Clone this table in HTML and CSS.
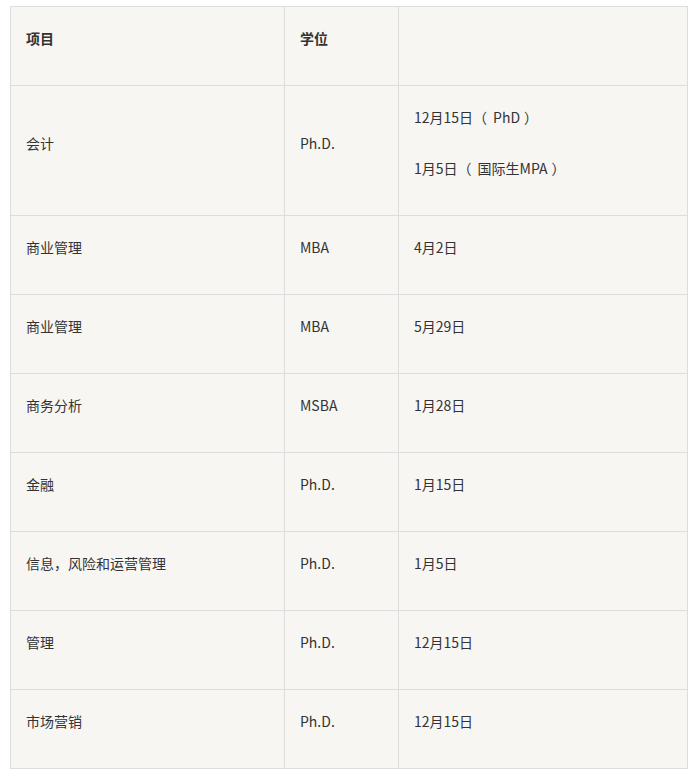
FILE: index.html
```html
<!DOCTYPE html>
<html lang="zh-CN">
<head>
<meta charset="utf-8">
<title>项目</title>
<link rel="stylesheet" href="styles.css">
</head>
<body>
<div class="wrap">
<table class="grid">
<colgroup>
<col class="c1"><col class="c2"><col class="c3">
</colgroup>
<thead>
<tr><th>项目</th><th>学位</th><th></th></tr>
</thead>
<tbody>
<tr><td>会计</td><td>Ph.D.</td><td><p>12月15日<span class="po">（</span>PhD<span class="pc">）</span></p><p>1月5日<span class="po">（</span>国际生MPA<span class="pc">）</span></p></td></tr>
<tr><td>商业管理</td><td>MBA</td><td>4月2日</td></tr>
<tr><td>商业管理</td><td>MBA</td><td>5月29日</td></tr>
<tr><td>商务分析</td><td>MSBA</td><td>1月28日</td></tr>
<tr><td>金融</td><td>Ph.D.</td><td>1月15日</td></tr>
<tr><td>信息，风险和运营管理</td><td>Ph.D.</td><td>1月5日</td></tr>
<tr><td>管理</td><td>Ph.D.</td><td>12月15日</td></tr>
<tr><td>市场营销</td><td>Ph.D.</td><td>12月15日</td></tr>
</tbody>
</table>
</div>
</body>
</html>
```

FILE: styles.css
```css
html, body {
  margin: 0;
  padding: 0;
  background: #ffffff;
}
.wrap {
  padding: 6px 10px;
}
.grid {
  border-collapse: collapse;
  table-layout: fixed;
  width: 677px;
  background: #f7f6f3;
  font-family: "Noto Sans CJK SC", "Noto Sans", sans-serif;
  font-size: 14px;
  line-height: 24px;
  color: #333333;
}
.c1 { width: 274px; }
.c2 { width: 114px; }
.c3 { width: 289px; }
.grid th,
.grid td {
  border: 1px solid #dddddd;
  padding: 19px 15px 35px;
  vertical-align: middle;
  text-align: left;
}
.grid th {
  font-weight: bold;
}
.grid p {
  margin: 0;
}
.grid p + p {
  margin-top: 27px;
}
.po {
  margin-right: 6px;
}
.pc {
  margin-left: 4px;
}
```
